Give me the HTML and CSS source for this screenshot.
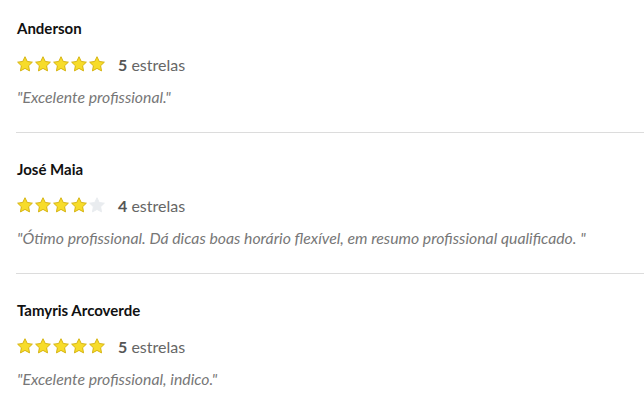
FILE: index.html
```html
<!DOCTYPE html>
<html lang="pt">
<head>
<meta charset="utf-8">
<link rel="stylesheet" href="styles.css">
</head>
<body>
<svg width="0" height="0" class="defs">
  <defs>
    <symbol id="star" viewBox="2 2 20 20">
      <path d="M12 2.9l2.8 5.9 6.4.9-4.7 4.5 1.2 6.4L12 17.5l-5.7 3.1 1.2-6.4-4.7-4.5 6.4-.9z"/>
    </symbol>
  </defs>
</svg>
<div class="reviews">
  <div class="review">
    <div class="name">Anderson</div>
    <div class="rating">
      <div class="stars">
        <svg class="star on"><use href="#star"/></svg>
        <svg class="star on"><use href="#star"/></svg>
        <svg class="star on"><use href="#star"/></svg>
        <svg class="star on"><use href="#star"/></svg>
        <svg class="star on"><use href="#star"/></svg>
      </div>
      <span class="count"><b>5</b> estrelas</span>
    </div>
    <p class="quote">"Excelente profissional."</p>
  </div>
  <div class="review">
    <div class="name">José Maia</div>
    <div class="rating">
      <div class="stars">
        <svg class="star on"><use href="#star"/></svg>
        <svg class="star on"><use href="#star"/></svg>
        <svg class="star on"><use href="#star"/></svg>
        <svg class="star on"><use href="#star"/></svg>
        <svg class="star off"><use href="#star"/></svg>
      </div>
      <span class="count"><b>4</b> estrelas</span>
    </div>
    <p class="quote">"Ótimo profissional. Dá dicas boas horário flexível, em resumo profissional qualificado. "</p>
  </div>
  <div class="review">
    <div class="name">Tamyris Arcoverde</div>
    <div class="rating">
      <div class="stars">
        <svg class="star on"><use href="#star"/></svg>
        <svg class="star on"><use href="#star"/></svg>
        <svg class="star on"><use href="#star"/></svg>
        <svg class="star on"><use href="#star"/></svg>
        <svg class="star on"><use href="#star"/></svg>
      </div>
      <span class="count"><b>5</b> estrelas</span>
    </div>
    <p class="quote">"Excelente profissional, indico."</p>
  </div>
</div>
</body>
</html>
```
FILE: styles.css
```css
html, body {
  margin: 0;
  padding: 0;
  background: #fff;
}
body {
  font-family: Lato, "Open Sans", sans-serif;
  color: #111;
}
.defs {
  position: absolute;
  width: 0;
  height: 0;
}
.reviews {
  padding-left: 16px;
}
.review {
  padding: 26px 0 25px 1px;
  border-bottom: 1px solid #dcdcdc;
}
.review:first-child {
  padding-top: 18px;
}
.review:last-child {
  border-bottom: none;
}
.name {
  font-size: 15px;
  line-height: 20px;
  font-weight: 700;
  color: #111;
}
.rating {
  margin-top: 17px;
  height: 18px;
  display: flex;
  align-items: center;
  gap: 13px;
}
.stars {
  display: flex;
  gap: 2px;
}
.star {
  width: 16px;
  height: 16px;
  display: block;
  overflow: visible;
}
.star.on {
  fill: #f7dc2a;
  stroke: #d4b20e;
  stroke-width: 1.2;
  stroke-linejoin: round;
}
.star.off {
  fill: #e9ecef;
  stroke: #e9ecef;
  stroke-width: 1.2;
  stroke-linejoin: round;
}
.count {
  font-size: 16px;
  color: #666;
}
.count b {
  color: #555;
  font-weight: 700;
}
.quote {
  margin: 14px 0 0;
  font-size: 15.8px;
  line-height: 20px;
  font-style: italic;
  color: #777;
}
```
